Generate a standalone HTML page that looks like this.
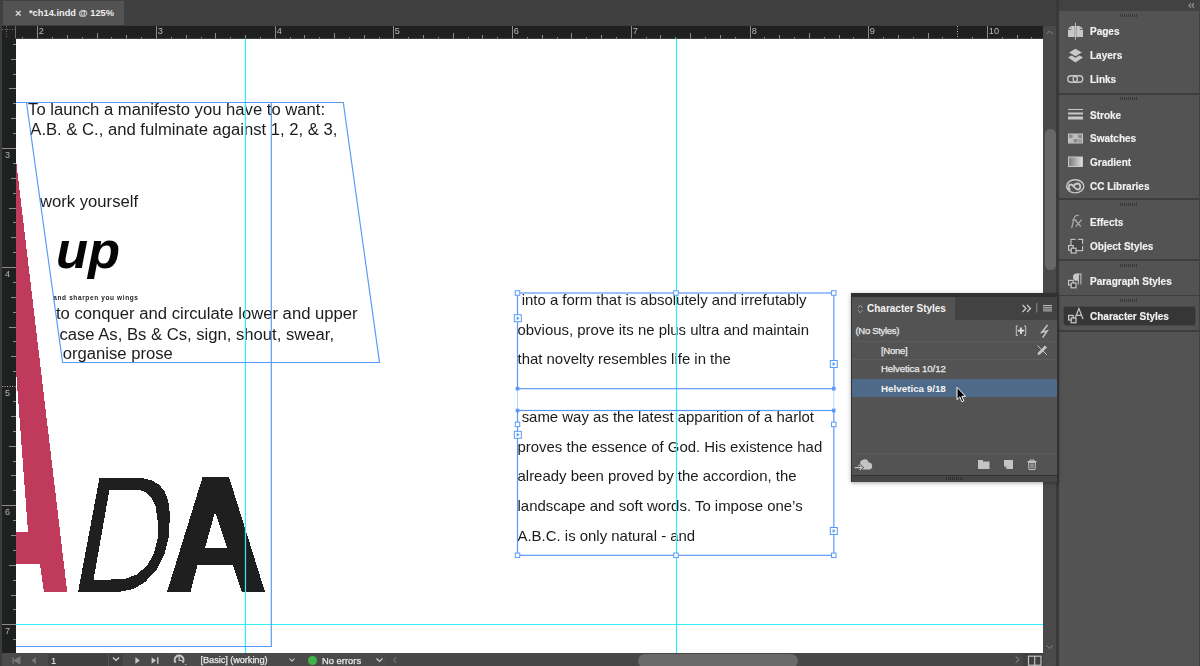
<!DOCTYPE html>
<html><head><meta charset="utf-8"><style>
html,body{margin:0;padding:0;width:1200px;height:666px;overflow:hidden;background:#3c3c3c;font-family:"Liberation Sans",sans-serif;}
.a{position:absolute;}
.t{position:absolute;white-space:pre;line-height:1;}
.pi{position:absolute;left:1090px;font-size:10px;font-weight:bold;color:#f2f2f2;white-space:pre;line-height:1;-webkit-text-stroke:0.15px #f2f2f2;}
.lt{-webkit-text-stroke:0.25px #e8e8e8;}
svg{position:absolute;left:0;top:0;will-change:transform;}
</style></head><body>
<div class="a" style="left:0;top:0;width:1058px;height:25px;background:#404040"></div>
<div class="a" style="left:3px;top:1px;width:121px;height:24px;background:#535353"></div>
<div class="t" style="left:15px;top:7.6px;font-size:11px;font-weight:bold;color:#dcdcdc">×</div>
<div class="t" style="left:29px;top:9px;font-size:9.3px;font-weight:bold;color:#eeeeee">*ch14.indd @ 125%</div>
<div class="a" style="left:2px;top:25.8px;width:1041px;height:12.7px;background:#1f2020"></div>
<div class="a" style="left:2px;top:38px;width:14px;height:615px;background:#1f2020"></div>
<div class="a" style="left:16px;top:38.5px;width:1027px;height:614.5px;background:#ffffff"></div>
<div class="a" style="left:1043px;top:25.8px;width:13px;height:627.2px;background:#4a4a4a"></div>
<div class="a" style="left:2px;top:652.5px;width:1054px;height:13.5px;background:#4a4a4a"></div>
<div class="a" style="left:1056px;top:0;width:3px;height:666px;background:#393939"></div>
<div class="a" style="left:1059px;top:0;width:141px;height:666px;background:#535353"></div>
<div class="a" style="left:1199px;top:0;width:1px;height:666px;background:#404040"></div>
<svg width="1200" height="666" viewBox="0 0 1200 666"><line x1="22.5" y1="37" x2="22.5" y2="38.5" stroke="#8c8c8c" stroke-width="1"/><line x1="37.5" y1="26" x2="37.5" y2="38.5" stroke="#8c8c8c" stroke-width="1"/><text x="38.8" y="34.3" font-size="9.2" fill="#b8b8b8" font-family="Liberation Sans">2</text><line x1="52.5" y1="37" x2="52.5" y2="38.5" stroke="#8c8c8c" stroke-width="1"/><line x1="67.5" y1="35" x2="67.5" y2="38.5" stroke="#8c8c8c" stroke-width="1"/><line x1="82.5" y1="37" x2="82.5" y2="38.5" stroke="#8c8c8c" stroke-width="1"/><line x1="97.5" y1="33" x2="97.5" y2="38.5" stroke="#8c8c8c" stroke-width="1"/><line x1="111.5" y1="37" x2="111.5" y2="38.5" stroke="#8c8c8c" stroke-width="1"/><line x1="126.5" y1="35" x2="126.5" y2="38.5" stroke="#8c8c8c" stroke-width="1"/><line x1="141.5" y1="37" x2="141.5" y2="38.5" stroke="#8c8c8c" stroke-width="1"/><line x1="156.5" y1="26" x2="156.5" y2="38.5" stroke="#8c8c8c" stroke-width="1"/><text x="157.8" y="34.3" font-size="9.2" fill="#b8b8b8" font-family="Liberation Sans">3</text><line x1="171.5" y1="37" x2="171.5" y2="38.5" stroke="#8c8c8c" stroke-width="1"/><line x1="186.5" y1="35" x2="186.5" y2="38.5" stroke="#8c8c8c" stroke-width="1"/><line x1="201.5" y1="37" x2="201.5" y2="38.5" stroke="#8c8c8c" stroke-width="1"/><line x1="215.5" y1="33" x2="215.5" y2="38.5" stroke="#8c8c8c" stroke-width="1"/><line x1="230.5" y1="37" x2="230.5" y2="38.5" stroke="#8c8c8c" stroke-width="1"/><line x1="245.5" y1="35" x2="245.5" y2="38.5" stroke="#8c8c8c" stroke-width="1"/><line x1="260.5" y1="37" x2="260.5" y2="38.5" stroke="#8c8c8c" stroke-width="1"/><line x1="275.5" y1="26" x2="275.5" y2="38.5" stroke="#8c8c8c" stroke-width="1"/><text x="276.8" y="34.3" font-size="9.2" fill="#b8b8b8" font-family="Liberation Sans">4</text><line x1="290.5" y1="37" x2="290.5" y2="38.5" stroke="#8c8c8c" stroke-width="1"/><line x1="304.5" y1="35" x2="304.5" y2="38.5" stroke="#8c8c8c" stroke-width="1"/><line x1="319.5" y1="37" x2="319.5" y2="38.5" stroke="#8c8c8c" stroke-width="1"/><line x1="334.5" y1="33" x2="334.5" y2="38.5" stroke="#8c8c8c" stroke-width="1"/><line x1="349.5" y1="37" x2="349.5" y2="38.5" stroke="#8c8c8c" stroke-width="1"/><line x1="364.5" y1="35" x2="364.5" y2="38.5" stroke="#8c8c8c" stroke-width="1"/><line x1="379.5" y1="37" x2="379.5" y2="38.5" stroke="#8c8c8c" stroke-width="1"/><line x1="393.5" y1="26" x2="393.5" y2="38.5" stroke="#8c8c8c" stroke-width="1"/><text x="394.8" y="34.3" font-size="9.2" fill="#b8b8b8" font-family="Liberation Sans">5</text><line x1="408.5" y1="37" x2="408.5" y2="38.5" stroke="#8c8c8c" stroke-width="1"/><line x1="423.5" y1="35" x2="423.5" y2="38.5" stroke="#8c8c8c" stroke-width="1"/><line x1="438.5" y1="37" x2="438.5" y2="38.5" stroke="#8c8c8c" stroke-width="1"/><line x1="453.5" y1="33" x2="453.5" y2="38.5" stroke="#8c8c8c" stroke-width="1"/><line x1="468.5" y1="37" x2="468.5" y2="38.5" stroke="#8c8c8c" stroke-width="1"/><line x1="482.5" y1="35" x2="482.5" y2="38.5" stroke="#8c8c8c" stroke-width="1"/><line x1="497.5" y1="37" x2="497.5" y2="38.5" stroke="#8c8c8c" stroke-width="1"/><line x1="512.5" y1="26" x2="512.5" y2="38.5" stroke="#8c8c8c" stroke-width="1"/><text x="513.8" y="34.3" font-size="9.2" fill="#b8b8b8" font-family="Liberation Sans">6</text><line x1="527.5" y1="37" x2="527.5" y2="38.5" stroke="#8c8c8c" stroke-width="1"/><line x1="542.5" y1="35" x2="542.5" y2="38.5" stroke="#8c8c8c" stroke-width="1"/><line x1="557.5" y1="37" x2="557.5" y2="38.5" stroke="#8c8c8c" stroke-width="1"/><line x1="571.5" y1="33" x2="571.5" y2="38.5" stroke="#8c8c8c" stroke-width="1"/><line x1="586.5" y1="37" x2="586.5" y2="38.5" stroke="#8c8c8c" stroke-width="1"/><line x1="601.5" y1="35" x2="601.5" y2="38.5" stroke="#8c8c8c" stroke-width="1"/><line x1="616.5" y1="37" x2="616.5" y2="38.5" stroke="#8c8c8c" stroke-width="1"/><line x1="631.5" y1="26" x2="631.5" y2="38.5" stroke="#8c8c8c" stroke-width="1"/><text x="632.8" y="34.3" font-size="9.2" fill="#b8b8b8" font-family="Liberation Sans">7</text><line x1="646.5" y1="37" x2="646.5" y2="38.5" stroke="#8c8c8c" stroke-width="1"/><line x1="660.5" y1="35" x2="660.5" y2="38.5" stroke="#8c8c8c" stroke-width="1"/><line x1="675.5" y1="37" x2="675.5" y2="38.5" stroke="#8c8c8c" stroke-width="1"/><line x1="690.5" y1="33" x2="690.5" y2="38.5" stroke="#8c8c8c" stroke-width="1"/><line x1="705.5" y1="37" x2="705.5" y2="38.5" stroke="#8c8c8c" stroke-width="1"/><line x1="720.5" y1="35" x2="720.5" y2="38.5" stroke="#8c8c8c" stroke-width="1"/><line x1="735.5" y1="37" x2="735.5" y2="38.5" stroke="#8c8c8c" stroke-width="1"/><line x1="750.5" y1="26" x2="750.5" y2="38.5" stroke="#8c8c8c" stroke-width="1"/><text x="751.8" y="34.3" font-size="9.2" fill="#b8b8b8" font-family="Liberation Sans">8</text><line x1="764.5" y1="37" x2="764.5" y2="38.5" stroke="#8c8c8c" stroke-width="1"/><line x1="779.5" y1="35" x2="779.5" y2="38.5" stroke="#8c8c8c" stroke-width="1"/><line x1="794.5" y1="37" x2="794.5" y2="38.5" stroke="#8c8c8c" stroke-width="1"/><line x1="809.5" y1="33" x2="809.5" y2="38.5" stroke="#8c8c8c" stroke-width="1"/><line x1="824.5" y1="37" x2="824.5" y2="38.5" stroke="#8c8c8c" stroke-width="1"/><line x1="839.5" y1="35" x2="839.5" y2="38.5" stroke="#8c8c8c" stroke-width="1"/><line x1="853.5" y1="37" x2="853.5" y2="38.5" stroke="#8c8c8c" stroke-width="1"/><line x1="868.5" y1="26" x2="868.5" y2="38.5" stroke="#8c8c8c" stroke-width="1"/><text x="869.8" y="34.3" font-size="9.2" fill="#b8b8b8" font-family="Liberation Sans">9</text><line x1="883.5" y1="37" x2="883.5" y2="38.5" stroke="#8c8c8c" stroke-width="1"/><line x1="898.5" y1="35" x2="898.5" y2="38.5" stroke="#8c8c8c" stroke-width="1"/><line x1="913.5" y1="37" x2="913.5" y2="38.5" stroke="#8c8c8c" stroke-width="1"/><line x1="928.5" y1="33" x2="928.5" y2="38.5" stroke="#8c8c8c" stroke-width="1"/><line x1="942.5" y1="37" x2="942.5" y2="38.5" stroke="#8c8c8c" stroke-width="1"/><line x1="957.5" y1="35" x2="957.5" y2="38.5" stroke="#8c8c8c" stroke-width="1"/><line x1="972.5" y1="37" x2="972.5" y2="38.5" stroke="#8c8c8c" stroke-width="1"/><line x1="987.5" y1="26" x2="987.5" y2="38.5" stroke="#8c8c8c" stroke-width="1"/><text x="988.8" y="34.3" font-size="9.2" fill="#b8b8b8" font-family="Liberation Sans">10</text><line x1="1002.5" y1="37" x2="1002.5" y2="38.5" stroke="#8c8c8c" stroke-width="1"/><line x1="1017.5" y1="35" x2="1017.5" y2="38.5" stroke="#8c8c8c" stroke-width="1"/><line x1="1031.5" y1="37" x2="1031.5" y2="38.5" stroke="#8c8c8c" stroke-width="1"/><line x1="13" y1="44.5" x2="16" y2="44.5" stroke="#8c8c8c" stroke-width="1"/><line x1="11" y1="59.5" x2="16" y2="59.5" stroke="#8c8c8c" stroke-width="1"/><line x1="13" y1="74.5" x2="16" y2="74.5" stroke="#8c8c8c" stroke-width="1"/><line x1="9" y1="88.5" x2="16" y2="88.5" stroke="#8c8c8c" stroke-width="1"/><line x1="13" y1="103.5" x2="16" y2="103.5" stroke="#8c8c8c" stroke-width="1"/><line x1="11" y1="118.5" x2="16" y2="118.5" stroke="#8c8c8c" stroke-width="1"/><line x1="13" y1="133.5" x2="16" y2="133.5" stroke="#8c8c8c" stroke-width="1"/><line x1="2" y1="148.5" x2="16" y2="148.5" stroke="#8c8c8c" stroke-width="1"/><text x="5" y="157.5" font-size="9" fill="#b4b4b4" font-family="Liberation Sans">3</text><line x1="13" y1="163.5" x2="16" y2="163.5" stroke="#8c8c8c" stroke-width="1"/><line x1="11" y1="178.5" x2="16" y2="178.5" stroke="#8c8c8c" stroke-width="1"/><line x1="13" y1="193.5" x2="16" y2="193.5" stroke="#8c8c8c" stroke-width="1"/><line x1="9" y1="208.5" x2="16" y2="208.5" stroke="#8c8c8c" stroke-width="1"/><line x1="13" y1="222.5" x2="16" y2="222.5" stroke="#8c8c8c" stroke-width="1"/><line x1="11" y1="237.5" x2="16" y2="237.5" stroke="#8c8c8c" stroke-width="1"/><line x1="13" y1="252.5" x2="16" y2="252.5" stroke="#8c8c8c" stroke-width="1"/><line x1="2" y1="267.5" x2="16" y2="267.5" stroke="#8c8c8c" stroke-width="1"/><text x="5" y="276.5" font-size="9" fill="#b4b4b4" font-family="Liberation Sans">4</text><line x1="13" y1="282.5" x2="16" y2="282.5" stroke="#8c8c8c" stroke-width="1"/><line x1="11" y1="297.5" x2="16" y2="297.5" stroke="#8c8c8c" stroke-width="1"/><line x1="13" y1="312.5" x2="16" y2="312.5" stroke="#8c8c8c" stroke-width="1"/><line x1="9" y1="327.5" x2="16" y2="327.5" stroke="#8c8c8c" stroke-width="1"/><line x1="13" y1="341.5" x2="16" y2="341.5" stroke="#8c8c8c" stroke-width="1"/><line x1="11" y1="356.5" x2="16" y2="356.5" stroke="#8c8c8c" stroke-width="1"/><line x1="13" y1="371.5" x2="16" y2="371.5" stroke="#8c8c8c" stroke-width="1"/><line x1="2" y1="386.5" x2="16" y2="386.5" stroke="#8c8c8c" stroke-width="1"/><text x="5" y="395.5" font-size="9" fill="#b4b4b4" font-family="Liberation Sans">5</text><line x1="13" y1="401.5" x2="16" y2="401.5" stroke="#8c8c8c" stroke-width="1"/><line x1="11" y1="416.5" x2="16" y2="416.5" stroke="#8c8c8c" stroke-width="1"/><line x1="13" y1="431.5" x2="16" y2="431.5" stroke="#8c8c8c" stroke-width="1"/><line x1="9" y1="446.5" x2="16" y2="446.5" stroke="#8c8c8c" stroke-width="1"/><line x1="13" y1="461.5" x2="16" y2="461.5" stroke="#8c8c8c" stroke-width="1"/><line x1="11" y1="475.5" x2="16" y2="475.5" stroke="#8c8c8c" stroke-width="1"/><line x1="13" y1="490.5" x2="16" y2="490.5" stroke="#8c8c8c" stroke-width="1"/><line x1="2" y1="505.5" x2="16" y2="505.5" stroke="#8c8c8c" stroke-width="1"/><text x="5" y="514.5" font-size="9" fill="#b4b4b4" font-family="Liberation Sans">6</text><line x1="13" y1="520.5" x2="16" y2="520.5" stroke="#8c8c8c" stroke-width="1"/><line x1="11" y1="535.5" x2="16" y2="535.5" stroke="#8c8c8c" stroke-width="1"/><line x1="13" y1="550.5" x2="16" y2="550.5" stroke="#8c8c8c" stroke-width="1"/><line x1="9" y1="565.5" x2="16" y2="565.5" stroke="#8c8c8c" stroke-width="1"/><line x1="13" y1="580.5" x2="16" y2="580.5" stroke="#8c8c8c" stroke-width="1"/><line x1="11" y1="595.5" x2="16" y2="595.5" stroke="#8c8c8c" stroke-width="1"/><line x1="13" y1="609.5" x2="16" y2="609.5" stroke="#8c8c8c" stroke-width="1"/><line x1="2" y1="624.5" x2="16" y2="624.5" stroke="#8c8c8c" stroke-width="1"/><text x="5" y="633.5" font-size="9" fill="#b4b4b4" font-family="Liberation Sans">7</text><line x1="13" y1="639.5" x2="16" y2="639.5" stroke="#8c8c8c" stroke-width="1"/><line x1="6.5" y1="26" x2="6.5" y2="38.5" stroke="#707070" stroke-width="1" stroke-dasharray="1,1.5"/><line x1="2" y1="29.5" x2="16" y2="29.5" stroke="#707070" stroke-width="1" stroke-dasharray="1,1.5"/><line x1="15.5" y1="26" x2="15.5" y2="38.5" stroke="#6a6a6a" stroke-width="1"/><rect x="955.5" y="26" width="4" height="12.5" fill="#1f2020"/><line x1="957.5" y1="26" x2="957.5" y2="38.5" stroke="#b0b0b0" stroke-width="1" stroke-dasharray="1,1.5"/><rect x="2" y="385" width="14" height="4" fill="#1f2020"/><line x1="2" y1="386.5" x2="16" y2="386.5" stroke="#b0b0b0" stroke-width="1" stroke-dasharray="1,1.5"/><clipPath id="pc"><rect x="16" y="38.5" width="1027" height="614.5"/></clipPath><g clip-path="url(#pc)"><path d="M16,160 L67.2,592 L44,592 L40,564 L16,564 L16,532 L28,532 L15,357 Z" fill="#c03b5b" shape-rendering="crispEdges"/><path fill="#1f1f1f" shape-rendering="crispEdges" fill-rule="evenodd" d="M99.4,478.2 L142.2,478.2 L152,480.5 L159.5,485 L164.6,491.4 L168.3,501 L169.6,512 L169.5,525 L168.5,538.2 L164.6,553.8 L156.8,569.4 L145.1,582.1 L133.4,588.9 L119.7,591.9 L78.1,591.9 Z M109.5,489.5 L138.3,489.5 L145,492 L151,497.5 L155.8,507 L157.8,522.6 L157.8,538.2 L153.9,553.8 L147,565.5 L137.3,574.3 L125.6,578.6 L110,579.6 L93.6,579.6 Z"/><path fill="#1f1f1f" shape-rendering="crispEdges" fill-rule="evenodd" d="M202.6,477 L229,477 L265,592 L242,592 L233,565 L197.5,565 L190.4,592 L167,592 Z M215,512 L227.3,548 L205,548 Z"/><text x="28.1" y="114.5" font-size="16.65" fill="#1c1c1c" font-family="Liberation Sans"  xml:space="preserve">To launch a manifesto you have to want:</text><text x="30.3" y="134.9" font-size="16.65" fill="#1c1c1c" font-family="Liberation Sans"  xml:space="preserve">A.B. &amp; C., and fulminate against 1, 2, &amp; 3,</text><text x="40.0" y="207.4" font-size="16.65" fill="#1c1c1c" font-family="Liberation Sans"  xml:space="preserve">work yourself</text><text x="56.0" y="267.5" font-size="52.5" fill="#050505" font-family="Liberation Sans" font-weight="bold" font-style="italic" xml:space="preserve">up</text><text x="53.3" y="300" font-size="6.5" fill="#1c1c1c" font-family="Liberation Sans" font-weight="bold" letter-spacing="0.62" xml:space="preserve">and sharpen you wings</text><text x="56.0" y="319.4" font-size="16.65" fill="#1c1c1c" font-family="Liberation Sans"  xml:space="preserve">to conquer and circulate lower and upper</text><text x="59.4" y="339.7" font-size="16.65" fill="#1c1c1c" font-family="Liberation Sans"  xml:space="preserve">case As, Bs &amp; Cs, sign, shout, swear,</text><text x="62.7" y="359" font-size="16.65" fill="#1c1c1c" font-family="Liberation Sans"  xml:space="preserve">organise prose</text><text x="517.5" y="304.7" font-size="14.95" fill="#1c1c1c" font-family="Liberation Sans"  xml:space="preserve"> into a form that is absolutely and irrefutably</text><text x="517.5" y="334.5" font-size="14.95" fill="#1c1c1c" font-family="Liberation Sans"  xml:space="preserve">obvious, prove its ne plus ultra and maintain</text><text x="517.5" y="364.2" font-size="14.95" fill="#1c1c1c" font-family="Liberation Sans"  xml:space="preserve">that novelty resembles life in the</text><text x="517.5" y="421.8" font-size="14.95" fill="#1c1c1c" font-family="Liberation Sans"  xml:space="preserve"> same way as the latest apparition of a harlot</text><text x="517.5" y="451.6" font-size="14.95" fill="#1c1c1c" font-family="Liberation Sans"  xml:space="preserve">proves the essence of God. His existence had</text><text x="517.5" y="481.4" font-size="14.95" fill="#1c1c1c" font-family="Liberation Sans"  xml:space="preserve">already been proved by the accordion, the</text><text x="517.5" y="510.8" font-size="14.95" fill="#1c1c1c" font-family="Liberation Sans"  xml:space="preserve">landscape and soft words. To impose one’s</text><text x="517.5" y="541.1" font-size="14.95" fill="#1c1c1c" font-family="Liberation Sans"  xml:space="preserve">A.B.C. is only natural - and</text><line x1="245.5" y1="38.5" x2="245.5" y2="653" stroke="#2ff0fa" stroke-width="1.2"/><line x1="676.5" y1="38.5" x2="676.5" y2="653" stroke="#2ff0fa" stroke-width="1.2"/><line x1="16" y1="624.5" x2="1043" y2="624.5" stroke="#2ff0fa" stroke-width="1.2"/><polyline points="16,102.5 343.3,102.5 379.5,362.5 62.6,362.5 26.5,102.5" fill="none" stroke="#5a9af7" stroke-width="1.2"/><polyline points="16,646.5 271.3,646.5 271.3,102.5" fill="none" stroke="#5a9af7" stroke-width="1.2"/><rect x="517.5" y="293" width="316.3" height="95.7" fill="none" stroke="#5a9af7" stroke-width="1.2"/><line x1="517.5" y1="388.7" x2="517.5" y2="410.5" stroke="#b9d4fb" stroke-width="1"/><line x1="833.8" y1="388.7" x2="833.8" y2="410.5" stroke="#b9d4fb" stroke-width="1"/><rect x="517.5" y="410.5" width="316.3" height="144.8" fill="none" stroke="#5a9af7" stroke-width="1.2"/><rect x="515.25" y="290.75" width="4.5" height="4.5" fill="#fff" stroke="#5a9af7" stroke-width="1"/><rect x="673.75" y="290.75" width="4.5" height="4.5" fill="#fff" stroke="#5a9af7" stroke-width="1"/><rect x="831.55" y="290.75" width="4.5" height="4.5" fill="#fff" stroke="#5a9af7" stroke-width="1"/><rect x="514.3" y="314.7" width="7" height="7" fill="#fff" stroke="#5a9af7" stroke-width="1"/><path d="M516.5999999999999,316.2 L519.5999999999999,318.2 L516.5999999999999,320.2 Z" fill="#5a9af7"/><rect x="830.3" y="360.5" width="7" height="7" fill="#fff" stroke="#5a9af7" stroke-width="1"/><path d="M832.5999999999999,362 L835.5999999999999,364 L832.5999999999999,366 Z" fill="#5a9af7"/><rect x="515.7" y="386.9" width="3.6" height="3.6" fill="#5a9af7"/><rect x="832.0" y="386.9" width="3.6" height="3.6" fill="#5a9af7"/><rect x="515.7" y="408.7" width="3.6" height="3.6" fill="#5a9af7"/><rect x="832.0" y="408.7" width="3.6" height="3.6" fill="#5a9af7"/><rect x="515.25" y="422.15" width="4.5" height="4.5" fill="#fff" stroke="#5a9af7" stroke-width="1"/><rect x="831.55" y="422.15" width="4.5" height="4.5" fill="#fff" stroke="#5a9af7" stroke-width="1"/><rect x="514.3" y="431.3" width="7" height="7" fill="#fff" stroke="#5a9af7" stroke-width="1"/><path d="M516.5999999999999,432.8 L519.5999999999999,434.8 L516.5999999999999,436.8 Z" fill="#5a9af7"/><rect x="830.3" y="527.5" width="7" height="7" fill="#fff" stroke="#5a9af7" stroke-width="1"/><path d="M832.5999999999999,529 L835.5999999999999,531 L832.5999999999999,533 Z" fill="#5a9af7"/><rect x="515.25" y="553.05" width="4.5" height="4.5" fill="#fff" stroke="#5a9af7" stroke-width="1"/><rect x="673.75" y="553.05" width="4.5" height="4.5" fill="#fff" stroke="#5a9af7" stroke-width="1"/><rect x="831.55" y="553.05" width="4.5" height="4.5" fill="#fff" stroke="#5a9af7" stroke-width="1"/></g></svg>
<div class="a" style="left:1059px;top:0;width:141px;height:11px;background:#424242"></div><div class="a" style="left:1059px;top:93px;width:141px;height:1.6px;background:#3e3e3e"></div><div class="a" style="left:1059px;top:198px;width:141px;height:1.6px;background:#3e3e3e"></div><div class="a" style="left:1059px;top:259.4px;width:141px;height:1.6px;background:#3e3e3e"></div><div class="a" style="left:1059px;top:294.6px;width:141px;height:1.6px;background:#3e3e3e"></div><div class="a" style="left:1059px;top:330px;width:141px;height:1.5px;background:#3e3e3e"></div><div class="a" style="left:1120px;top:14px;width:17px;height:3px;background:repeating-linear-gradient(90deg,#393939 0 1px,transparent 1px 2px)"></div><div class="a" style="left:1120px;top:97px;width:17px;height:3px;background:repeating-linear-gradient(90deg,#393939 0 1px,transparent 1px 2px)"></div><div class="a" style="left:1120px;top:203px;width:17px;height:3px;background:repeating-linear-gradient(90deg,#393939 0 1px,transparent 1px 2px)"></div><div class="a" style="left:1120px;top:263.5px;width:17px;height:3px;background:repeating-linear-gradient(90deg,#393939 0 1px,transparent 1px 2px)"></div><div class="a" style="left:1120px;top:299px;width:17px;height:3px;background:repeating-linear-gradient(90deg,#393939 0 1px,transparent 1px 2px)"></div><div class="a" style="left:1063px;top:305.5px;width:131px;height:18.5px;background:#363636;border:1px solid #474747;border-radius:3px"></div><div class="pi" style="top:27.4px">Pages</div><div class="pi" style="top:50.9px">Layers</div><div class="pi" style="top:74.7px">Links</div><div class="pi" style="top:110.7px">Stroke</div><div class="pi" style="top:134.4px">Swatches</div><div class="pi" style="top:158.4px">Gradient</div><div class="pi" style="top:182.2px">CC Libraries</div><div class="pi" style="top:217.9px">Effects</div><div class="pi" style="top:241.9px">Object Styles</div><div class="pi" style="top:276.9px">Paragraph Styles</div><div class="pi" style="top:312.0px">Character Styles</div>
<svg width="1200" height="666" viewBox="0 0 1200 666"><path d="M1068,29.8 H1071.2 V25.9 H1074.8 V37 H1068 Z M1068,28.9 L1070.9,25.9 V28.9 Z M1076.3,25.9 H1079.9 V29.8 H1083 V37 H1076.3 Z M1083,28.9 L1080.2,25.9 V28.9 Z" fill="#c8c8c8"/><line x1="1075.5" y1="22.8" x2="1075.5" y2="39.6" stroke="#bdbdbd" stroke-width="1"/><path d="M1068,57.5 L1075.5,53 L1083,57.5 L1075.5,62.5 Z" fill="#c8c8c8"/><path d="M1068,52.5 L1075.5,48 L1083,52.5 L1075.5,57 Z" fill="#c8c8c8" stroke="#535353" stroke-width="1.3"/><rect x="1067.8" y="75.8" width="9.5" height="6.5" rx="3.2" fill="none" stroke="#c8c8c8" stroke-width="1.4"/><rect x="1073.2" y="75.8" width="9.5" height="6.5" rx="3.2" fill="none" stroke="#c8c8c8" stroke-width="1.4"/><rect x="1068" y="109" width="15" height="1" fill="#c8c8c8"/><rect x="1068" y="112.5" width="15" height="2" fill="#c8c8c8"/><rect x="1068" y="116.5" width="15" height="3" fill="#c8c8c8"/><rect x="1068.5" y="134" width="14" height="9" fill="#8a8a8a" stroke="#c8c8c8" stroke-width="1"/><path d="M1068.5,138.5 H1082.5 M1073,134 V143 M1077.8,134 V143" stroke="#c8c8c8" stroke-width="0.8"/><rect x="1073" y="134.5" width="4.8" height="4" fill="#bdbdbd"/><rect x="1069" y="139" width="4" height="3.5" fill="#bdbdbd"/><rect x="1078" y="139" width="4" height="3.5" fill="#a0a0a0"/><defs><linearGradient id="gg" x1="0" x2="1"><stop offset="0" stop-color="#777"/><stop offset="1" stop-color="#e0e0e0"/></linearGradient></defs><rect x="1068.5" y="157" width="14" height="9.5" fill="url(#gg)" stroke="#c8c8c8" stroke-width="1"/><ellipse cx="1075.2" cy="186.3" rx="8.6" ry="6.6" fill="none" stroke="#c8c8c8" stroke-width="1.4"/><path d="M1070.5,189.5 C1068,189.5 1068,184.5 1071,184.5 C1073,184.5 1075,189.5 1078,189.5 C1081,189.5 1081,184 1078,183.5 C1076,183.5 1074,185 1073.5,186" fill="none" stroke="#c8c8c8" stroke-width="1.8"/><path d="M1078.8,215.6 C1076.3,214.6 1074.6,216 1074.1,218.5 L1071.6,228.2 M1071.8,220 H1076.6" fill="none" stroke="#ababab" stroke-width="1.2"/><path d="M1075.2,220 L1080.8,226.5 M1081.8,219.6 L1075.6,226.6" fill="none" stroke="#ababab" stroke-width="1.2"/><rect x="1071" y="239.4" width="11.6" height="11.2" fill="#464646" stroke="#c8c8c8" stroke-width="1.1"/><circle cx="1076.8" cy="239.4" r="1.3" fill="#535353"/><circle cx="1082.6" cy="245" r="1.3" fill="#535353"/><rect x="1068.6" y="245.6" width="4.6" height="4.6" fill="#3e3e3e" stroke="#c8c8c8" stroke-width="1.2"/><rect x="1071.1999999999998" y="248.2" width="4.8" height="4.8" fill="#3e3e3e" stroke="#c8c8c8" stroke-width="1.2"/><path d="M1078.6,273.6 H1076.2 C1073.8,273.6 1073,275.5 1073,277.2 C1073,279 1074,280.8 1076.4,280.8 H1078.6 Z" fill="#c8c8c8"/><path d="M1078.3,273.6 V284.4 M1080.9,273.6 V284.4 M1078,274.1 H1081.4" fill="none" stroke="#c8c8c8" stroke-width="1"/><rect x="1068.6" y="280.4" width="4.6" height="4.6" fill="#3e3e3e" stroke="#c8c8c8" stroke-width="1.2"/><rect x="1071.1999999999998" y="283.0" width="4.8" height="4.8" fill="#3e3e3e" stroke="#c8c8c8" stroke-width="1.2"/><path d="M1074.8,319 L1078.9,308.6 L1083,319 M1076.2,315.4 H1081.6" fill="none" stroke="#c8c8c8" stroke-width="1.2"/><rect x="1068.6" y="315.4" width="4.6" height="4.6" fill="#3e3e3e" stroke="#c8c8c8" stroke-width="1.2"/><rect x="1071.1999999999998" y="318.0" width="4.8" height="4.8" fill="#3e3e3e" stroke="#c8c8c8" stroke-width="1.2"/></svg>
<div class="a" style="left:48px;top:654px;width:75px;height:12px;background:#404040;border-radius:2px"></div><div class="a" style="left:108px;top:654px;width:1px;height:12px;background:#555555"></div><div class="t" style="left:51px;top:656px;font-size:9.5px;color:#f0f0f0">1</div><div class="t" style="left:200.5px;top:655.5px;font-size:9.3px;color:#ececec;letter-spacing:-0.1px;-webkit-text-stroke:0.25px #e8e8e8">[Basic] (working)</div><div class="a" style="left:307.5px;top:655.5px;width:9px;height:9px;border-radius:50%;background:#3fb44b"></div><div class="t" style="left:322px;top:655.5px;font-size:9.4px;color:#ececec;-webkit-text-stroke:0.25px #e8e8e8">No errors</div><div class="a" style="left:387px;top:653px;width:655px;height:13px;background:#474747"></div><div class="a" style="left:638px;top:653.5px;width:160px;height:14px;background:#6a6a6a;border-radius:7px"></div><div class="a" style="left:1023px;top:653px;width:20px;height:13px;background:#3f3f3f"></div><div class="a" style="left:1044.5px;top:129px;width:11px;height:141px;background:#686868;border-radius:5.5px"></div>
<svg width="1200" height="666" viewBox="0 0 1200 666"><path d="M13.2,657.2 V663.7 M19.8,657.2 L14.6,660.45 L19.8,663.7 Z" fill="#7a7a7a" stroke="#7a7a7a" stroke-width="1.2"/><path d="M35.8,657.2 L31.4,660.45 L35.8,663.7 Z" fill="#7a7a7a"/><path d="M113,657.5 L116,660.5 L119,657.5" fill="none" stroke="#d8d8d8" stroke-width="1.2"/><path d="M135.4,657.2 L139.9,660.45 L135.4,663.7 Z" fill="#c8c8c8"/><path d="M151.6,657.2 L156,660.45 L151.6,663.7 Z" fill="#c8c8c8"/><path d="M157.8,657.2 V663.7" stroke="#c8c8c8" stroke-width="1.4"/><path d="M175.6,662.6 A4.4,4.4 0 1 1 182.6,662.6" fill="none" stroke="#c8c8c8" stroke-width="2"/><path d="M179.2,656.5 V660.5 H182" fill="none" stroke="#c8c8c8" stroke-width="1.2"/><path d="M184.8,664 L186.6,664 L185.7,665.2 Z" fill="#c8c8c8"/><path d="M289.5,658.5 L292,661.2 L294.5,658.5" fill="none" stroke="#d0d0d0" stroke-width="1.1"/><path d="M376.5,658.5 L379.5,661.5 L382.5,658.5" fill="none" stroke="#d0d0d0" stroke-width="1.1"/><path d="M396,657 L393.5,659.8 L396,662.6" fill="none" stroke="#8a8a8a" stroke-width="1"/><path d="M1016,656.5 L1018.8,659.5 L1016,662.5" fill="none" stroke="#9a9a9a" stroke-width="1"/><rect x="1028.5" y="656.2" width="12.5" height="9" fill="none" stroke="#c0c0c0" stroke-width="1.2"/><line x1="1034.7" y1="656" x2="1034.7" y2="665.5" stroke="#c0c0c0" stroke-width="1.2"/><path d="M1054.5,658 L1047,665.5 M1054.5,661 L1050,665.5 M1054.5,664 L1053,665.5" stroke="#6a6a6a" stroke-width="0.8" stroke-dasharray="1,1"/><path d="M1046.5,34 L1049.5,31 L1052.5,34" fill="none" stroke="#8a8a8a" stroke-width="1"/><path d="M1046.5,645.5 L1049.5,648.5 L1052.5,645.5" fill="none" stroke="#8a8a8a" stroke-width="1"/><path d="M1190.9,3.4 L1189,5.5 L1190.9,7.6 M1193.9,3.4 L1192,5.5 L1193.9,7.6" fill="none" stroke="#9c9c9c" stroke-width="1.1"/></svg>
<div class="a" style="left:850.5px;top:293px;width:207px;height:189px;box-shadow:0 1px 4px rgba(0,0,0,0.35)"></div><div class="a" style="left:850.5px;top:293px;width:207px;height:189px;background:#313131"></div><div class="a" style="left:851.5px;top:296.5px;width:205px;height:23.5px;background:#424242"></div><div class="a" style="left:851.5px;top:296.5px;width:103.5px;height:23.5px;background:#535353"></div><div class="a" style="left:851.5px;top:320px;width:205px;height:155px;background:#535353"></div><div class="a" style="left:851.5px;top:341px;width:205px;height:1px;background:#5c5c5c"></div><div class="a" style="left:851.5px;top:359px;width:205px;height:1px;background:#5c5c5c"></div><div class="a" style="left:851.5px;top:378.7px;width:205px;height:18.3px;background:#4e6a88"></div><div class="a" style="left:851.5px;top:452.5px;width:205px;height:1px;background:#5a5a5a"></div><div class="a" style="left:851.5px;top:476px;width:205px;height:5.5px;background:#474747"></div><div class="a" style="left:945.5px;top:477px;width:17px;height:3px;background:repeating-linear-gradient(90deg,#2f2f2f 0 1px,transparent 1px 2px)"></div><div class="t" style="left:867px;top:304.2px;font-size:10px;font-weight:bold;color:#f2f2f2">Character Styles</div><div class="t" style="left:855.5px;top:326px;font-size:9.6px;color:#ececec;letter-spacing:-0.35px;-webkit-text-stroke:0.25px #e8e8e8">(No Styles)</div><div class="t" style="left:881px;top:345.6px;font-size:9.6px;color:#ececec;letter-spacing:-0.3px;-webkit-text-stroke:0.25px #e8e8e8">[None]</div><div class="t" style="left:881px;top:364.4px;font-size:9.6px;color:#ececec;letter-spacing:-0.1px;-webkit-text-stroke:0.25px #e8e8e8">Helvetica 10/12</div><div class="t" style="left:881px;top:383.5px;font-size:9.8px;font-weight:bold;color:#f4f4f4">Helvetica 9/18</div>
<svg width="1200" height="666" viewBox="0 0 1200 666"><path d="M858,308 L860.3,305.2 L862.6,308 M858,310 L860.3,312.8 L862.6,310" fill="none" stroke="#9a9a9a" stroke-width="1"/><path d="M1022.5,305 L1026,308.5 L1022.5,312 M1027,305 L1030.5,308.5 L1027,312" fill="none" stroke="#d0d0d0" stroke-width="1.2"/><line x1="1036.8" y1="303" x2="1036.8" y2="312.5" stroke="#8a8a8a" stroke-width="1"/><line x1="1043" y1="305.5" x2="1052" y2="305.5" stroke="#b8b8b8" stroke-width="1"/><line x1="1043" y1="307.3" x2="1052" y2="307.3" stroke="#b8b8b8" stroke-width="1"/><line x1="1043" y1="309.1" x2="1052" y2="309.1" stroke="#b8b8b8" stroke-width="1"/><line x1="1043" y1="310.9" x2="1052" y2="310.9" stroke="#b8b8b8" stroke-width="1"/><path d="M1018,326 H1016.3 V335.4 H1018 M1024,326 H1025.7 V335.4 H1024" fill="none" stroke="#c4c4c4" stroke-width="1"/><path d="M1021,327.5 V334 M1017.8,330.7 H1024.2" stroke="#e0e0e0" stroke-width="1.8"/><path d="M1047.6,325 L1041.8,332.2 L1047.2,331 L1042.6,337.6" fill="none" stroke="#c4c4c4" stroke-width="1.5" stroke-linejoin="miter"/><line x1="1037.5" y1="345.5" x2="1047" y2="355" stroke="#c4c4c4" stroke-width="1"/><path d="M1045,345.5 L1047,347.5 L1040,354.5 L1037.5,355 L1038,352.5 Z" fill="#c4c4c4"/><path d="M957,387.3 L957,399.6 L959.8,396.9 L961.9,401.7 L963.8,400.9 L961.8,396.3 L965.6,396.3 Z" fill="#000" stroke="#fff" stroke-width="1" stroke-linejoin="round"/><path d="M859.5,469.5 A2.6,2.6 0 0 1 860.2,464.4 A4.3,4.3 0 0 1 868.6,462.6 A3.5,3.5 0 0 1 869.5,469.5 Z" fill="#c4c4c4"/><path d="M854.8,467.6 H862.2 M859.8,465.2 L862.2,467.6 L859.8,470" fill="none" stroke="#535353" stroke-width="2.6"/><path d="M854.8,467.6 H862.2 M859.8,465.2 L862.2,467.6 L859.8,470" fill="none" stroke="#c4c4c4" stroke-width="1.1"/><path d="M978,460 H983 L984,461.5 H989.5 V469 H978 Z" fill="#c4c4c4"/><rect x="983" y="460" width="1" height="1.5" fill="#535353"/><path d="M1004,460 H1013 V469 H1007 L1004,466 Z" fill="#c4c4c4"/><path d="M1004,466 H1007 V469 Z" fill="#535353"/><path d="M1004.5,466.5 H1006.5 V468.5" fill="none" stroke="#c4c4c4" stroke-width="0.8"/><path d="M1027.5,461.5 H1036.5 M1030,461.5 V460 H1034 V461.5 M1028.5,462.5 L1029,469.5 H1035 L1035.5,462.5 Z M1031,463.5 V468 M1033,463.5 V468" fill="none" stroke="#c4c4c4" stroke-width="1"/></svg>
</body></html>
